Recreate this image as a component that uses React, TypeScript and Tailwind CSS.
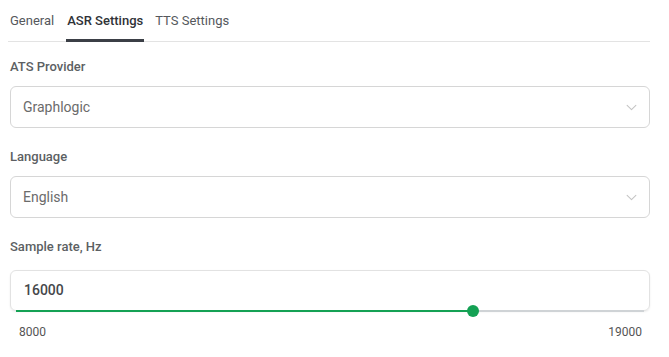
import { useState } from 'react';

const tabs = ['General', 'ASR Settings', 'TTS Settings'];

const Chevron = () => (
  <svg width="11" height="7" viewBox="0 0 12 8" fill="none" className="text-[#c4c4c4]">
    <path d="M1 1.5L6 6.5L11 1.5" stroke="currentColor" strokeWidth="1.2" strokeLinecap="round" strokeLinejoin="round" />
  </svg>
);

const SelectField: React.FC<{ label: string; value: string }> = ({ label, value }) => (
  <div className="flex flex-col">
    <div className="h-4 text-[13px] leading-4 font-medium text-[#5c5f63]">{label}</div>
    <div className="mt-[11px] h-[42px] rounded-md border border-[#d6d6d6] flex items-center justify-between pl-[12px] pr-[12px]">
      <span className="text-[14px] text-[#6b6b6b]">{value}</span>
      <Chevron />
    </div>
  </div>
);

export default function App() {
  const [active] = useState(1);
  const min = 8000;
  const max = 19000;
  const value = 16000;
  const pct = ((value - min) / (max - min)) * 100;

  return (
    <div className="w-[669px] h-[357px] bg-white pl-[10px] pr-[19px]" style={{ fontFamily: 'Roboto, "Liberation Sans", sans-serif' }}>
      {/* Tabs */}
      <div className="flex h-[42px] border-b border-[#e3e3e3] -ml-[2px]">
        {tabs.map((t, i) => (
          <div
            key={t}
            className={
              i === active
                ? 'h-[42px] flex items-center px-[1px] ml-[10px] mr-[9px] border-b-[3px] border-[#3b3f46] pt-[2px] text-[13px] font-medium text-[#2f3237]'
                : 'h-[42px] flex items-center px-[2px] text-[13px] text-[#55585c]'
            }
          >
            {t}
          </div>
        ))}
      </div>

      <div className="pt-[17px]">
        <SelectField label="ATS Provider" value="Graphlogic" />
      </div>
      <div className="pt-[21px]">
        <SelectField label="Language" value="English" />
      </div>

      {/* Sample rate */}
      <div className="pt-[21px] flex flex-col">
        <div className="h-4 text-[13px] leading-4 font-medium text-[#5c5f63]">Sample rate, Hz</div>
        <div className="relative mt-[15px] h-[41px] rounded-md border border-[#e2e2e2] shadow-[0_1px_2px_rgba(0,0,0,0.08)] flex items-center pl-[13px] pb-[1px]">
          <span className="text-[14px] font-medium text-[#45474a]">{value}</span>
          <div className="absolute left-[5px] right-[5px] -bottom-[2px] h-[2px] bg-[#cfd3d6]">
            <div className="h-full bg-[#14a154]" style={{ width: `${pct}%` }} />
            <div
              className="absolute top-1/2 w-[12px] h-[12px] -mt-[6px] -ml-[6px] rounded-full bg-[#14a154]"
              style={{ left: `${pct}%` }}
            />
          </div>
        </div>
        <div className="flex justify-between mt-[12px] pl-[9px] pr-[8px] text-[12px] text-[#555]">
          <span>{min}</span>
          <span>{max}</span>
        </div>
      </div>
    </div>
  );
}
